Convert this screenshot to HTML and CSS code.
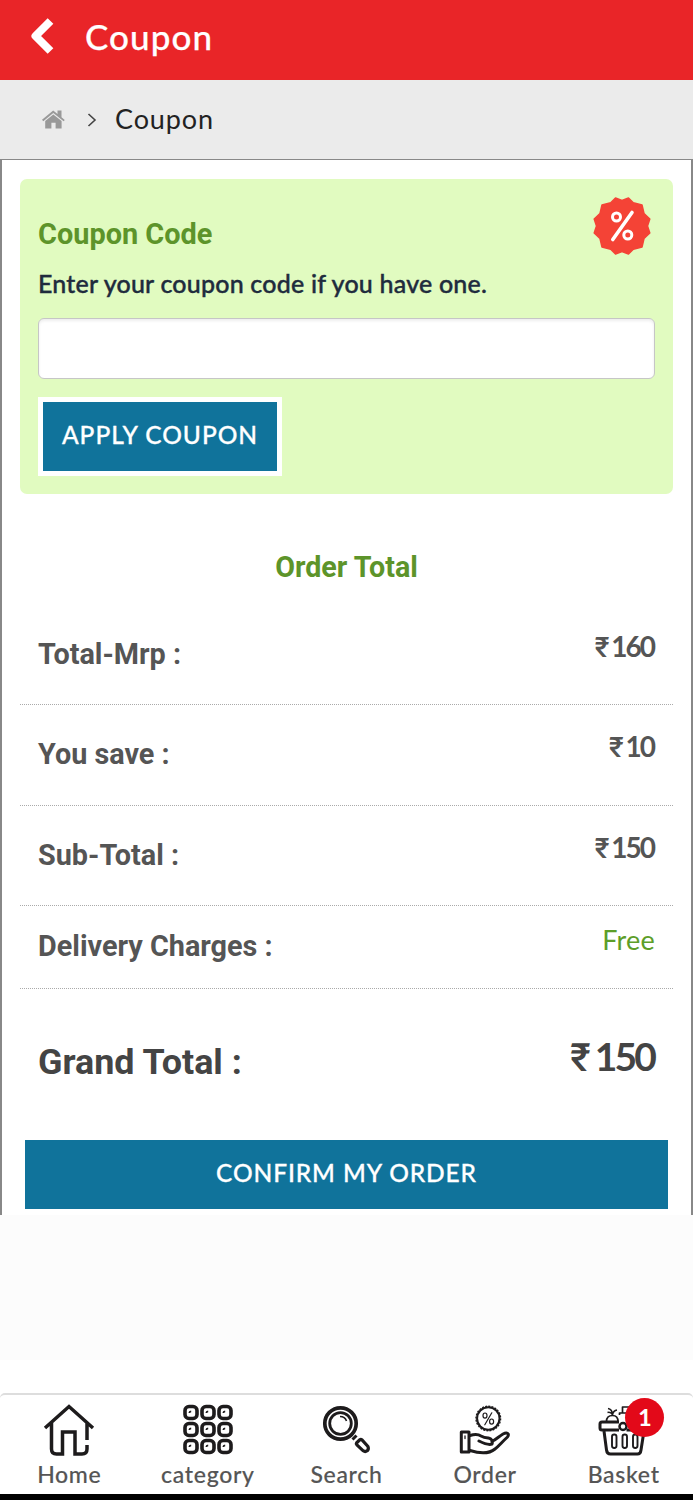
FILE: index.html
```html
<!DOCTYPE html>
<html lang="en">
<head>
<meta charset="utf-8">
<title>Coupon</title>
<link rel="stylesheet" href="styles.css">
</head>
<body>
<header class="topbar">
  <svg class="back" viewBox="0 0 24 36"><path d="M20.500 3 5.500 18 20.500 33" fill="none" stroke="#fff" stroke-width="8" stroke-linejoin="round"/></svg>
  <h1 class="topbar-title">Coupon</h1>
</header>
<nav class="crumbs">
  <svg class="crumb-home" viewBox="0 0 23 19" fill="#999"><path d="M0 9.700 11.200.4 15.500 4V.6h4v6.700l3.300 2.700-1.200 1.300L11.300 2.900 1.300 11.200Z"/><path d="M3.200 11 11.300 4.400 19.600 11v7.500h-6v-5.700H9.400v5.700H3.200Z"/></svg>
  <svg class="crumb-sep" viewBox="0 0 10 14"><path d="M1.500 1 8 7l-6.500 6" fill="none" stroke="#444" stroke-width="1.600"/></svg>
  <span class="crumb-text">Coupon</span>
</nav>
<main class="content">
  <section class="card">
    <div class="card-head">
      <h2 class="card-title">Coupon Code</h2>
      <svg class="seal" viewBox="0 0 58 58">
        <path fill="#f44336" stroke="#f44336" stroke-width="1.500" stroke-linejoin="round" d="M22.500 1 29 3.500 35.500 1 40.300 5.700 49 8 51 16.500 56.800 22 54.500 29 56.800 36 51 41.500 49 50 40.300 52.300 35.500 57 29 54.500 22.500 57 17.700 52.300 9 50 7 41.500 1.200 36 3.500 29 1.200 22 7 16.500 9 8 17.700 5.700Z"/>
        <g fill="none" stroke="#fff"><path d="M19.800 42.500 39 15.500" stroke-width="3.600" stroke-linecap="round"/><circle cx="23.500" cy="20" r="4" stroke-width="3"/><circle cx="34.800" cy="38" r="4" stroke-width="3"/></g>
      </svg>
    </div>
    <p class="hint">Enter your coupon code if you have one.</p>
    <input class="code" type="text" aria-label="Coupon code">
    <button class="apply">APPLY COUPON</button>
  </section>
  <h2 class="order-title">Order Total</h2>
  <div class="row"><span class="label">Total-Mrp :</span><span class="price"><b class="rupee">₹</b>160</span></div>
  <div class="row"><span class="label">You save :</span><span class="price"><b class="rupee">₹</b>10</span></div>
  <div class="row"><span class="label">Sub-Total :</span><span class="price"><b class="rupee">₹</b>150</span></div>
  <div class="row row-short"><span class="label">Delivery Charges :</span><span class="free">Free</span></div>
  <div class="grand"><span class="grand-label">Grand Total :</span><span class="grand-price"><b class="rupee">₹</b>150</span></div>
  <button class="confirm">CONFIRM MY ORDER</button>
</main>
<div class="filler"></div>
<nav class="tabs">
  <a class="tab"><svg class="icon" viewBox="0 0 52 52" fill="none" stroke="#1d1b1c" stroke-width="3.500"><path d="M2 24 26 2.500l24 21.500M8.500 19v26q0 5 5 5h6V28h12.500v22h7q5 0 5-5v-4M44 19v17"/></svg><span>Home</span></a>
  <a class="tab"><svg class="icon" viewBox="0 0 52 52" fill="none" stroke="#1d1b1c">
    <defs><g id="cell"><rect x="3" y="2.500" width="12" height="12" rx="4" stroke-width="3.600"/><path d="M7.300 9q0-1.500 1.900-1.700" stroke-width="1.700"/></g></defs>
    <use href="#cell"/><use href="#cell" x="17"/><use href="#cell" x="34"/><use href="#cell" y="17"/><use href="#cell" x="17" y="17"/><use href="#cell" x="34" y="17"/><use href="#cell" y="34"/><use href="#cell" x="17" y="34"/><use href="#cell" x="34" y="34"/></svg><span>category</span></a>
  <a class="tab"><svg class="icon" viewBox="0 0 52 52" fill="none" stroke="#1d1b1c"><circle cx="20.500" cy="19.500" r="15.700" stroke-width="3.700"/><circle cx="20.500" cy="19.500" r="10.800" stroke-width="2.800"/><path d="M20 12.500q5 0 6.500 4.500" stroke-width="1.600"/><path d="m32.500 35.500 4-4" stroke-width="3"/><path d="m36.500 39 3.500-3.500q1-.6 2 .4l6 6.600q1 2.500-.8 4.300-2 1.400-4 0l-6.300-6q-1-1-.4-1.800Z" stroke-width="3.200"/></svg><span>Search</span></a>
  <a class="tab"><svg class="icon" viewBox="0 0 52 52" fill="none" stroke="#1d1b1c" stroke-width="3" stroke-linecap="round" stroke-linejoin="round"><circle cx="29.300" cy="14.500" r="11.200" stroke-width="2"/><circle cx="29.300" cy="14.500" r="12.300" stroke-width="1.400" stroke-linecap="butt" stroke-dasharray="2 1.200"/><g stroke-width="1.200"><ellipse cx="26" cy="11.600" rx="2" ry="2.600"/><ellipse cx="32.600" cy="17.600" rx="2" ry="2.600"/><path d="M32.800 8.800 25.800 20.800"/></g><path d="M2.300 28H10v20H2.300Z"/><path d="M6 32v2.500" stroke-width="1.300"/><path d="M11 31.500c5-1.500 8-1.500 11 .5 3 1.700 5 1.800 7.500 2 3 .5 4.500 3 3.500 6-2.500 1-8-.5-13-3M33 37.500c4-2 7-5 11-7.500 4-2 7-.5 4.500 3C43 38 40 42 36 45c-6 5-14 5-25 1.500"/></svg><span>Order</span></a>
  <a class="tab"><svg class="icon" viewBox="0 0 52 52" fill="none" stroke="#1d1b1c" stroke-width="3" stroke-linejoin="round"><path d="M21 18H4q-2 0-2 2v4q0 2 2 2h17M28.500 26H48.500V18H28.500"/><path d="m6 27 2.500 19q.5 4 4 4h27q3 0 3.500-4L46 27"/><path d="M8.500 17.500q0-6 6-6 5.500 0 5.500 6M10 4.500q4 .5 4.500 6 1-4 4.500-4.500M9.500 8.500q3-1 5 2M21.500 11V9h14v8.500M24.500 8.500V3h8" stroke-width="1.700"/><circle cx="25" cy="22.500" r="3.500" stroke-width="2.500"/><g stroke-width="1.900"><rect x="14" y="30.500" width="4.500" height="13.500" rx="2.200"/><rect x="24.500" y="30.500" width="4.500" height="13.500" rx="2.200"/><rect x="35" y="30.500" width="4.500" height="13.500" rx="2.200"/></g></svg><span>Basket</span><span class="badge">1</span></a>
</nav>
</body>
</html>
```
FILE: styles.css
```css
* { box-sizing: border-box; }
body { margin: 0; height: 1500px; background: #fff; font-family: Lato, sans-serif; color: #222; display: flex; flex-direction: column; }
h1, h2, p { margin: 0; }
.topbar { height: 80px; background: #e92528; display: flex; padding: 18px 0 0 30px; gap: 31px; }
.back { width: 24px; height: 36px; }
.topbar-title { color: #fff; font-size: 35px; line-height: 36px; font-weight: 500; letter-spacing: 1.1px; -webkit-text-stroke: .25px; }
.crumbs { height: 79px; background: #ebebeb; display: flex; align-items: center; padding-left: 42px; }
.crumb-home { width: 23px; height: 19px; }
.crumb-sep { width: 10px; height: 14px; margin: 0 18px 0 22px; }
.crumb-text { font-size: 27px; line-height: 34px; letter-spacing: .9px; padding-bottom: 2px; }
.content { height: 1056px; border: 2px solid #888; border-top-width: 1px; border-bottom: 0; padding: 19px 18px 0; }
.card { height: 315px; background: #e1fbc0; border-radius: 7px; padding: 18px 18px 0; }
.card-head { height: 58px; display: flex; justify-content: space-between; padding-right: 4px; }
.card-title { font: bold 28.9px/36px Roboto, sans-serif; color: #5d942a; padding-top: 19px; }
.seal { width: 58px; height: 58px; }
.hint { font-size: 25px; line-height: 34px; font-weight: 500; color: #202b3d; letter-spacing: .2px; margin-top: 11px; white-space: nowrap; -webkit-text-stroke: .4px; }
.code { display: block; width: 100%; height: 61px; margin-top: 18px; border: 1px solid #c6c6c6; border-radius: 6px; background: #fff; box-shadow: inset 0 2px 3px #eee; }
button { font-family: Lato, sans-serif; color: #fff; background: #10739b; padding: 0; font-weight: 500; font-size: 24.5px; -webkit-text-stroke: .3px; }
.apply { display: block; width: 244px; height: 79px; margin-top: 18px; border: 5px solid #fff; letter-spacing: 1px; padding-bottom: 4px; }
.order-title { font: bold 28.7px/36px Roboto, sans-serif; color: #5d942a; text-align: center; margin-top: 55px; height: 69px; }
.row { height: 100.7px; border-bottom: 1px dotted #aaa; display: flex; justify-content: space-between; padding: 17px 18px 0; }
.label { font: bold 28.8px/36px Roboto, sans-serif; color: #555; padding-top: 14px; }
.price { font-size: 28px; line-height: 36px; font-weight: 700; color: #555; padding-top: 6px; letter-spacing: -2px; padding-right: 1px; }
.order-title + .row { height: 87px; padding-top: 4px; }
.row-short { height: 82.6px; padding-top: 8px; }
.rupee { font-family: Roboto, sans-serif; font-weight: 500; margin-right: 4px; }
.free { color: #5d9e28; font-size: 27px; line-height: 36px; padding-top: 8px; letter-spacing: .2px; }
.grand { height: 151px; display: flex; justify-content: space-between; padding: 44px 18px 0; color: #444; }
.grand-label { font: bold 35.9px/44px Roboto, sans-serif; padding-top: 7px; }
.grand-price { font-size: 39px; line-height: 46px; font-weight: 700; letter-spacing: -2.9px; padding-right: 1px; }
.grand-price .rupee { margin-right: 7px; }
.confirm { display: block; width: 643px; height: 69px; margin-left: 5px; border: 0; letter-spacing: .9px; padding-bottom: 4px; }
.filler { height: 145px; background: #fcfcfc; }
.tabs { height: 101px; margin-top: 33px; border-top: 2px solid #ddd; border-radius: 5px 5px 0 0; display: flex; box-shadow: 0 6px 0 #000; }
.tab { position: relative; width: 138.6px; display: flex; flex-direction: column; align-items: center; padding-top: 9px; font-size: 23px; line-height: 28px; color: #555; font-weight: 500; letter-spacing: .7px; -webkit-text-stroke: .15px; }
.icon { width: 52px; height: 52px; margin-bottom: 4px; }
.badge { position: absolute; left: 71px; top: 3px; width: 39px; height: 39px; border-radius: 50%; background: #e30919; color: #fff; text-align: center; line-height: 38px; font-weight: 700; letter-spacing: 0; }
```
